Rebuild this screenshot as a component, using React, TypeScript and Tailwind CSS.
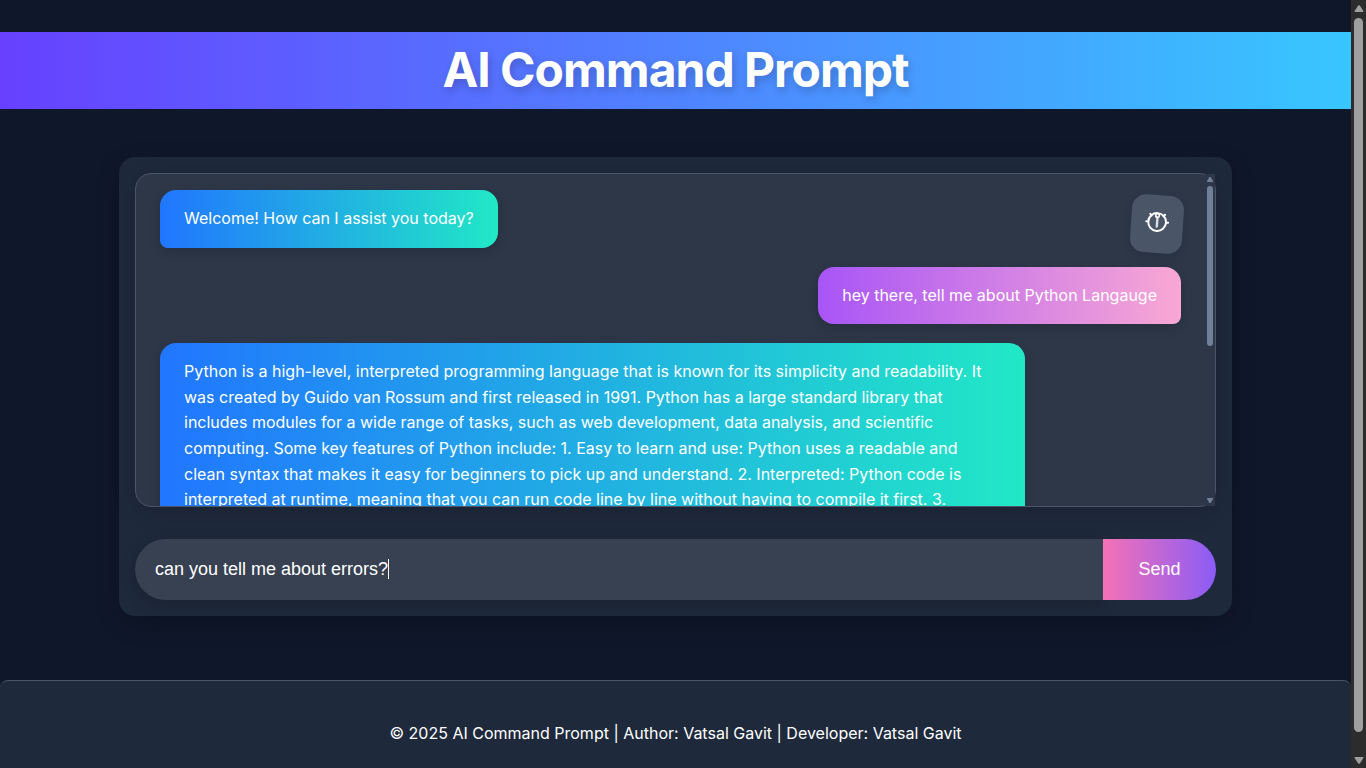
import { useState, type ReactNode } from "react";

type Message = { from: "bot" | "user"; text: string };

const messages: Message[] = [
  { from: "bot", text: "Welcome! How can I assist you today?" },
  { from: "user", text: "hey there, tell me about Python Langauge" },
  {
    from: "bot",
    text: "Python is a high-level, interpreted programming language that is known for its simplicity and readability. It was created by Guido van Rossum and first released in 1991. Python has a large standard library that includes modules for a wide range of tasks, such as web development, data analysis, and scientific computing. Some key features of Python include: 1. Easy to learn and use: Python uses a readable and clean syntax that makes it easy for beginners to pick up and understand. 2. Interpreted: Python code is interpreted at runtime, meaning that you can run code line by line without having to compile it first. 3.",
  },
];

function Bubble({ from, children }: { from: Message["from"]; children: ReactNode }) {
  const look =
    from === "bot"
      ? "self-start rounded-bl-lg bg-linear-to-r/srgb from-[#2176ff] to-[#21e8c6]"
      : "self-end rounded-br-lg bg-linear-to-r/srgb from-[#a855f7] to-[#f9a8d4]";
  return (
    <div
      className={`max-w-[calc(80%+48px)] shrink-0 rounded-2xl px-6 py-4 text-base leading-[1.6] text-white shadow-[0_4px_12px_rgba(0,0,0,0.15)] ${look}`}
    >
      {children}
    </div>
  );
}

function PageScrollbar() {
  return (
    <div aria-hidden="true" className="flex w-[15px] shrink-0 flex-col items-center bg-[#2c2c2c] pt-[5px] pb-1">
      <svg viewBox="0 0 10 8" className="h-2 w-2.5 shrink-0" fill="#9f9f9f">
        <path d="M4.2 0.6Q5 0 5.8 0.6L9.4 6Q9.6 7 8.8 7H1.2Q0.4 7 0.6 6Z" />
      </svg>
      <div className="mt-[5px] mb-6 w-[9px] grow rounded-full bg-[#9f9f9f]" />
      <svg viewBox="0 0 10 8" className="h-2 w-2.5 shrink-0" fill="#9f9f9f">
        <path d="M4.2 7.4Q5 8 5.8 7.4L9.4 2Q9.6 1 8.8 1H1.2Q0.4 1 0.6 2Z" />
      </svg>
    </div>
  );
}

function ChatScrollbar() {
  return (
    <div aria-hidden="true" className="flex w-2.5 shrink-0 flex-col items-center bg-[#2d3748] py-[3px]">
      <svg viewBox="0 0 6 5" className="h-[5px] w-1.5 shrink-0" fill="#718096">
        <path d="M2.4 0H3.6L6 4V5H0V4Z" />
      </svg>
      <div className="mt-1 h-40 w-1.5 rounded-full bg-[#718096]" />
      <svg viewBox="0 0 6 5" className="mt-auto h-[5px] w-1.5 shrink-0" fill="#718096">
        <path d="M2.4 5H3.6L6 1V0H0V1Z" />
      </svg>
    </div>
  );
}

export default function App() {
  const [prompt, setPrompt] = useState("can you tell me about errors?");

  return (
    <div className="flex h-screen bg-[#0f172a] font-['Inter',sans-serif] text-white">
      <div className="flex min-w-0 grow flex-col overflow-hidden">
        <h1 className="mt-8 shrink-0 bg-linear-to-r/srgb from-[#6741ff] to-[#38c6ff] pb-px text-center text-5xl leading-[76px] font-bold tracking-[-1px] text-shadow-[2px_4px_8px_rgba(0,0,0,0.2)]">
          AI Command Prompt
        </h1>

        <main className="mx-[119px] mt-12 flex shrink-0 flex-col gap-8 rounded-2xl bg-[#1e293b] p-4 shadow-[0_8px_24px_rgba(0,0,0,0.2)]">
          <section
            aria-label="Conversation"
            className="relative flex h-[334px] rounded-2xl border border-[#4a5568] bg-[#2d3748] shadow-[0_4px_24px_rgba(0,0,0,0.15)]"
          >
            <div className="flex min-w-0 grow flex-col gap-[19px] overflow-x-hidden overflow-y-auto rounded-l-2xl px-6 pt-4 [scrollbar-width:none]">
              {messages.map((message) => (
                <Bubble key={message.text} from={message.from}>
                  {message.text}
                </Bubble>
              ))}
            </div>
            <ChatScrollbar />
            <button
              type="button"
              aria-label="Toggle theme"
              className="absolute top-[21px] right-8 flex h-[58px] w-[52px] rotate-4 items-center justify-center rounded-[14px] bg-[#4a5568] shadow-[0_4px_12px_rgba(0,0,0,0.1)]"
            >
              <svg viewBox="0 0 24 24" className="mb-1 size-6" fill="none" stroke="#fff" strokeWidth="2" strokeLinecap="round">
                <circle cx="12" cy="12" r="8.9" />
                <circle cx="12" cy="5.6" r="1.8" strokeWidth="1.6" />
                <path d="M12 8V16.5" strokeWidth="2.4" strokeOpacity="0.8" />
                <path d="M1 12H3M21 12H23M4.6 4.2L6 6M19.4 4.2L18 6" />
              </svg>
            </button>
          </section>

          <form className="flex" onSubmit={(event) => event.preventDefault()}>
            <div className="relative min-w-0 grow">
              <input
                type="text"
                aria-label="Prompt"
                value={prompt}
                onChange={(event) => setPrompt(event.target.value)}
                className="peer h-[61px] w-full rounded-l-full bg-[#374151] px-5 font-['Liberation_Sans',sans-serif] text-lg text-white shadow-[0_4px_16px_rgba(0,0,0,0.2)] outline-none"
              />
              <span aria-hidden="true" className="absolute top-5 left-[253px] h-5 w-px bg-white peer-focus:hidden" />
            </div>
            <button
              type="submit"
              className="relative h-[61px] w-[113px] shrink-0 rounded-r-full bg-linear-to-r/srgb from-[#f472b6] to-[#8b5cf6] pb-px font-['Liberation_Sans',sans-serif] text-lg text-white"
            >
              Send
            </button>
          </form>
        </main>

        <footer className="mt-16 grow rounded-t-lg border-t border-[#4a5568] bg-[#1e293b] pt-10 text-center text-base leading-6">
          © 2025 AI Command Prompt | Author: Vatsal Gavit | Developer: Vatsal Gavit
        </footer>
      </div>
      <PageScrollbar />
    </div>
  );
}
